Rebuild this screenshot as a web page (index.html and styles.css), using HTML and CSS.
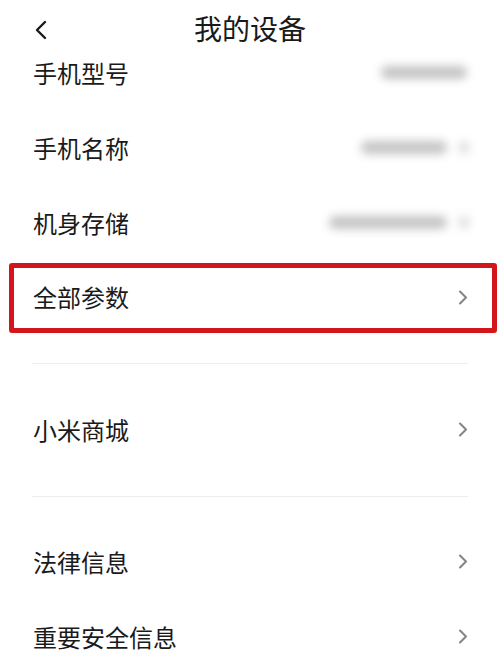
FILE: index.html
```html
<!DOCTYPE html>
<html lang="zh-CN">
<head>
    <meta charset="UTF-8">
    <meta name="viewport" content="width=device-width, initial-scale=1.0">
    <title>我的设备</title>
    <link rel="stylesheet" href="styles.css">
</head>
<body>

    <div class="header">
        <svg class="back" width="14" height="20" viewBox="0 0 14 20">
            <path d="M11 2 L3 10 L11 18" fill="none" stroke="#1a1a1a" stroke-width="2.4" stroke-linecap="round" stroke-linejoin="round"/>
        </svg>
        <div class="title">我的设备</div>
        <div></div>
    </div>

    <div class="row">
        <span class="label">手机型号</span>
        <span class="value">
            <span class="blur w1"></span>
        </span>
    </div>
    <div class="row">
        <span class="label">手机名称</span>
        <span class="value">
            <span class="blur w2"></span>
            <span class="blur dot"></span>
        </span>
    </div>
    <div class="row">
        <span class="label">机身存储</span>
        <span class="value">
            <span class="blur w3"></span>
            <span class="blur dot"></span>
        </span>
    </div>

    <div class="row marked">
        <span class="label">全部参数</span>
        <svg class="arrow" width="11" height="15" viewBox="0 0 11 15">
            <path d="M2 1.5 L8 7.5 L2 13.5" fill="none" stroke="#858585" stroke-width="2.1" stroke-linecap="round" stroke-linejoin="round"/>
        </svg>
    </div>

    <div class="line first"></div>

    <div class="row shop">
        <span class="label">小米商城</span>
        <svg class="arrow" width="11" height="15" viewBox="0 0 11 15">
            <path d="M2 1.5 L8 7.5 L2 13.5" fill="none" stroke="#858585" stroke-width="2.1" stroke-linecap="round" stroke-linejoin="round"/>
        </svg>
    </div>

    <div class="line second"></div>

    <div class="row">
        <span class="label">法律信息</span>
        <svg class="arrow" width="11" height="15" viewBox="0 0 11 15">
            <path d="M2 1.5 L8 7.5 L2 13.5" fill="none" stroke="#858585" stroke-width="2.1" stroke-linecap="round" stroke-linejoin="round"/>
        </svg>
    </div>
    <div class="row">
        <span class="label">重要安全信息</span>
        <svg class="arrow" width="11" height="15" viewBox="0 0 11 15">
            <path d="M2 1.5 L8 7.5 L2 13.5" fill="none" stroke="#858585" stroke-width="2.1" stroke-linecap="round" stroke-linejoin="round"/>
        </svg>
    </div>

</body>
</html>
```

FILE: styles.css
```css
body{
    margin: 0;
    width: 500px;
    height: 670px;
    overflow: hidden;
    background-color: #ffffff;
    color: #1a1a1a;
    font-family: "Noto Sans CJK SC", "Noto Sans", sans-serif;
}
.header{
    height: 37px;
    box-sizing: border-box;
    padding: 9px 0 0 34px;
    display: grid;
    grid-template-columns: 1fr auto 1fr;
    align-items: start;
}
.back{
    margin-top: 11px;
}
.title{
    font-size: 28px;
    line-height: 38px;
    margin-left: -34px;
}
.row{
    height: 75px;
    box-sizing: border-box;
    padding: 0 31px 4px 33px;
    display: flex;
    align-items: center;
    justify-content: space-between;
}
.label{
    font-size: 24px;
    line-height: 30px;
}
.value{
    display: flex;
    align-items: center;
    gap: 12px;
}
.blur{
    display: block;
    height: 13px;
    background-color: #c4c4c4;
    border-radius: 6px;
    filter: blur(5px);
}
.w1{
    width: 86px;
    margin-right: 2px;
}
.w2{
    width: 86px;
}
.w3{
    width: 118px;
}
.dot{
    width: 10px;
    background-color: #dcdcdc;
}
.marked{
    height: 70px;
    margin: 1px 3px 0 9px;
    padding: 0 23px 2px 19px;
    border: 5px solid #d3161b;
    border-radius: 3px;
}
.arrow{
    display: block;
}
.line{
    height: 1px;
    margin: 0 32px;
    background-color: #ececec;
}
.first{
    margin-top: 30px;
    margin-bottom: 30px;
}
.second{
    margin-top: 27px;
    margin-bottom: 29px;
}
```
